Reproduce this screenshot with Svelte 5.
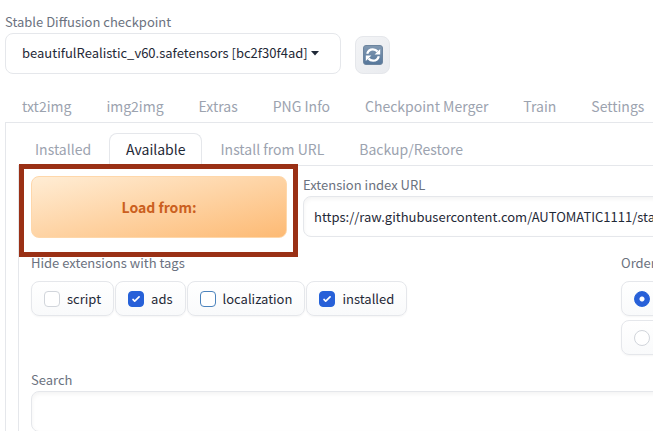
<script>
  const mainTabs = ['txt2img', 'img2img', 'Extras', 'PNG Info', 'Checkpoint Merger', 'Train', 'Settings'];
  const subTabs = ['Installed', 'Available', 'Install from URL', 'Backup/Restore'];
  let current = $state('Available');
  let tags = $state([
    { name: 'script', on: false },
    { name: 'ads', on: true },
    { name: 'localization', on: false, focus: true },
    { name: 'installed', on: true }
  ]);
  let order = $state('newest first');
  let url = $state('https://raw.githubusercontent.com/AUTOMATIC1111/stable-diffusion-webui-extensions/master/index.json');
  let search = $state('');
</script>

<div class="app">
  <div class="page">
    <header>
      <div class="field">
        <label class="caption" for="ckpt">Stable Diffusion checkpoint</label>
        <div class="select">
          <select id="ckpt">
            <option>beautifulRealistic_v60.safetensors [bc2f30f4ad]</option>
          </select>
          <svg class="caret" viewBox="0 0 8 5" aria-hidden="true"><path d="M0 0h8L4 4.6z" fill="#1f2937" /></svg>
        </div>
      </div>
      <button class="refresh" aria-label="Refresh">
        <svg viewBox="0 0 20 20" aria-hidden="true">
          <defs>
            <linearGradient id="tile" x1="0" y1="0" x2="0" y2="1">
              <stop offset="0" stop-color="#8299b2" />
              <stop offset="1" stop-color="#56779b" />
            </linearGradient>
          </defs>
          <rect x="0.5" y="0.5" width="19" height="19" rx="2.5" fill="url(#tile)" stroke="#6d859f" />
          <g fill="none" stroke="#fff" stroke-width="2.3">
            <path d="M4.2 8.8C5 5.9 7.3 4.3 9.9 4.3c1.9 0 3.5.8 4.6 2.2" />
            <path d="M15.8 11.2c-.8 2.9-3.1 4.5-5.7 4.5-1.9 0-3.5-.8-4.6-2.2" />
          </g>
          <path d="M17.2 4v5.4h-5.6zM2.8 16v-5.4h5.6z" fill="#fff" />
        </svg>
      </button>
    </header>

    <nav class="tabs">
      {#each mainTabs as tab}
        <button class="tab">{tab}</button>
      {/each}
    </nav>

    <main>
      <nav class="tabs">
        {#each subTabs as tab}
          <button class="tab" class:selected={tab === current} onclick={() => (current = tab)}>{tab}</button>
        {/each}
      </nav>

      <section>
        <div class="source">
          <div class="highlight">
            <button class="load">Load from:</button>
          </div>
          <div class="field">
            <label class="caption" for="url">Extension index URL</label>
            <input id="url" class="text" type="text" bind:value={url} />
          </div>
        </div>

        <div class="filters">
          <fieldset>
            <legend class="caption">Hide extensions with tags</legend>
            <div class="chips">
              {#each tags as tag}
                <label class="chip">
                  <input type="checkbox" class:focus={tag.focus} bind:checked={tag.on} />
                  <span>{tag.name}</span>
                </label>
              {/each}
            </div>
          </fieldset>
          <fieldset>
            <legend class="caption">Order</legend>
            <div class="chips column">
              {#each ['newest first', 'oldest first'] as value}
                <label class="chip">
                  <input type="radio" name="order" {value} bind:group={order} />
                  <span>{value}</span>
                </label>
              {/each}
            </div>
          </fieldset>
        </div>

        <div class="field">
          <label class="caption" for="search">Search</label>
          <input id="search" class="text" type="text" bind:value={search} />
        </div>
      </section>
    </main>
  </div>
</div>

<style>
  :global(body) {
    background: #fff;
  }
  .app {
    height: 100vh;
    overflow: hidden;
    font-family: 'Noto Sans CJK SC', 'Noto Sans', sans-serif;
    font-size: 13px;
    line-height: 20px;
    color: #1f2937;
  }
  .app * {
    box-sizing: border-box;
  }
  button, input, select {
    font: inherit;
    color: inherit;
    margin: 0;
  }
  .page {
    min-width: 1200px;
    padding: 12px 5px;
  }
  header {
    display: flex;
    align-items: flex-end;
    gap: 14px;
  }
  .field {
    display: flex;
    flex-direction: column;
  }
  .caption {
    display: block;
    padding: 0 0 2px;
    color: #6b7280;
    line-height: 19px;
  }
  .select {
    position: relative;
  }
  .select select {
    appearance: none;
    width: 336px;
    height: 41px;
    padding: 0 16px 2px;
    border: 1px solid #e5e7eb;
    border-radius: 8px;
    background: #fff;
  }
  .caret {
    position: absolute;
    right: 22px;
    top: 18px;
    width: 8px;
    height: 5px;
  }
  .refresh {
    display: grid;
    place-items: center;
    width: 35px;
    height: 38px;
    padding: 0;
    border: 1px solid #e5e7eb;
    border-radius: 8px;
    background: linear-gradient(to bottom right, #f3f4f6, #e9ebef);
  }
  .refresh svg {
    width: 20px;
    height: 20px;
  }
  .tabs {
    display: flex;
    gap: 1px;
    border-bottom: 1px solid #e5e7eb;
  }
  .page > .tabs {
    margin-top: 17px;
  }
  .tab {
    height: 33px;
    margin-bottom: -1px;
    padding: 0 16px 2px;
    border: 1px solid transparent;
    border-bottom: 0;
    border-radius: 8px 8px 0 0;
    background: transparent;
    color: #9ca3af;
    font-size: 14px;
    white-space: nowrap;
  }
  .page > .tabs {
    margin-top: 16px;
  }
  .tab.selected {
    border-color: #e5e7eb;
    background: #fff;
    color: #1f2937;
  }
  main {
    padding: 10px 12px;
    border: 1px solid #e5e7eb;
    border-top: 0;
  }
  section {
    padding: 9px 12px;
    border: 1px solid #e5e7eb;
    border-top: 0;
  }
  .source {
    display: flex;
    gap: 5px;
    margin-bottom: 16px;
  }
  .source .field {
    flex: 1;
  }
  .highlight {
    position: relative;
    z-index: 1;
    width: 279px;
    margin: -11px 0 -20px -12px;
    padding: 7px 6px 14px 7px;
    border: 5px solid #9a3015;
  }
  .load {
    display: block;
    width: 100%;
    height: 62px;
    border: 1px solid #fed7aa;
    border-radius: 8px;
    background: linear-gradient(to bottom right, #ffedd5, #fdba74);
    color: #cb5f20;
    font-size: 14px;
    font-weight: 700;
  }
  .text {
    width: 100%;
    height: 41px;
    padding: 0 10px;
    border: 1px solid #e5e7eb;
    border-radius: 8px;
    background: #fff;
    box-shadow: inset 0 2px 4px rgba(0, 0, 0, 0.05);
  }
  .filters {
    display: grid;
    grid-template-columns: 574px 1fr;
    gap: 16px;
    margin-bottom: 15px;
  }
  fieldset {
    margin: 0;
    padding: 0;
    border: 0;
  }
  .chips {
    display: flex;
    gap: 1px;
    margin-top: 7px;
  }
  .column {
    flex-direction: column;
    align-items: flex-start;
    gap: 4px;
  }
  .chip {
    display: flex;
    align-items: center;
    gap: 7px;
    height: 35px;
    padding: 0 12px;
    border: 1px solid #e5e7eb;
    border-radius: 8px;
    background: linear-gradient(to top, #f9fafb, #fff);
    box-shadow: 0 1px 2px rgba(0, 0, 0, 0.04);
  }
  .chip input {
    appearance: none;
    width: 16px;
    height: 16px;
    border: 1px solid #d1d5db;
    border-radius: 4px;
    background: #fff;
  }
  .chip input.focus {
    border-color: #4b83bd;
  }
  .chip input:checked {
    border-color: #2563d9;
    background: #2860d8;
  }
  .chip input[type='checkbox']:checked {
    background-image: url("data:image/svg+xml,%3Csvg viewBox='0 0 16 16' fill='white' xmlns='http://www.w3.org/2000/svg'%3E%3Cpath d='M12.2 4.8a1 1 0 0 1 0 1.4l-5 5a1 1 0 0 1-1.4 0l-2-2a1 1 0 0 1 1.4-1.4L6.500 9.100l4.300-4.300a1 1 0 0 1 1.4 0z'/%3E%3C/svg%3E");
  }
  .chip input[type='radio'] {
    border-radius: 50%;
  }
  .chip input[type='radio']:checked {
    background: radial-gradient(circle, #fff 2px, #2860d8 3px);
  }
</style>
